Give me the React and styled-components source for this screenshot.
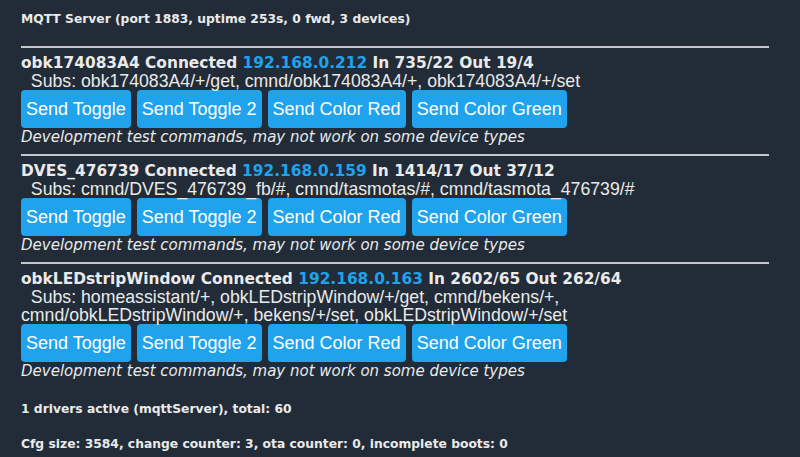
import React from "react";
import styled, { createGlobalStyle } from "styled-components";

const GlobalStyle = createGlobalStyle`
    body {
        margin: 0;
        background: #212c38;
        color: #eaeaea;
        font-family: "Liberation Sans", Arial, sans-serif;
    }
`;

const Page = styled.div`
    padding: 10px 31px 0 21px;
    height: 457px;
    box-sizing: border-box;
    overflow: hidden;
`;

const Info = styled.div`
    font-family: "DejaVu Sans", Verdana, sans-serif;
    font-weight: bold;
    font-size: 12.3px;
    line-height: 18px;
    white-space: nowrap;
    margin-top: ${(props) => props.gap || 0}px;
`;

const Rule = styled.div`
    height: 2px;
    background: #c4c7ca;
    margin-top: 18px;
`;

const Device = styled.div`
    padding: 6px 0 8px;
    border-bottom: ${(props) => (props.last ? "none" : "2px solid #c4c7ca")};
`;

const Header = styled.div`
    font-family: "DejaVu Sans", Verdana, sans-serif;
    font-weight: bold;
    font-size: 15.4px;
    line-height: 18px;
    white-space: nowrap;
`;

const Ip = styled.span`
    color: #1fa3ec;
`;

const Subs = styled.div`
    position: relative;
    z-index: 1;
    font-size: 17.7px;
    line-height: 18px;
    white-space: pre-wrap;
`;

const Buttons = styled.div`
    display: flex;
    gap: 6px;
`;

const Button = styled.button`
    border: 0;
    border-radius: 4px;
    background: #1fa3ec;
    color: #fff;
    font-family: "Liberation Sans", Arial, sans-serif;
    font-size: 18px;
    height: 38px;
    padding: 0 5px;
    cursor: pointer;
`;

const Note = styled.div`
    font-family: "DejaVu Sans", Verdana, sans-serif;
    font-style: italic;
    font-size: 15px;
    line-height: 18px;
    white-space: nowrap;
`;

const devices = [
    {
        name: "obk174083A4",
        ip: "192.168.0.212",
        stats: "In 735/22 Out 19/4",
        subs: "obk174083A4/+/get, cmnd/obk174083A4/+, obk174083A4/+/set",
    },
    {
        name: "DVES_476739",
        ip: "192.168.0.159",
        stats: "In 1414/17 Out 37/12",
        subs: "cmnd/DVES_476739_fb/#, cmnd/tasmotas/#, cmnd/tasmota_476739/#",
    },
    {
        name: "obkLEDstripWindow",
        ip: "192.168.0.163",
        stats: "In 2602/65 Out 262/64",
        subs: "homeassistant/+, obkLEDstripWindow/+/get, cmnd/bekens/+,\ncmnd/obkLEDstripWindow/+, bekens/+/set, obkLEDstripWindow/+/set",
    },
];

const commands = ["Send Toggle", "Send Toggle 2", "Send Color Red", "Send Color Green"];

const App = () => {
    return (
        <>
            <GlobalStyle />
            <Page>
                <Info>MQTT Server (port 1883, uptime 253s, 0 fwd, 3 devices)</Info>
                <Rule />
                {devices.map((d, i) => (
                    <Device key={d.name} last={i === devices.length - 1}>
                        <Header>
                            {d.name} Connected <Ip>{d.ip}</Ip> {d.stats}
                        </Header>
                        <Subs>{"  Subs: " + d.subs}</Subs>
                        <Buttons>
                            {commands.map((c) => (
                                <Button key={c}>{c}</Button>
                            ))}
                        </Buttons>
                        <Note>Development test commands, may not work on some device types</Note>
                    </Device>
                ))}
                <Info gap={12}>1 drivers active (mqttServer), total: 60</Info>
                <Info gap={17}>Cfg size: 3584, change counter: 3, ota counter: 0, incomplete boots: 0</Info>
            </Page>
        </>
    );
};

export default App;
